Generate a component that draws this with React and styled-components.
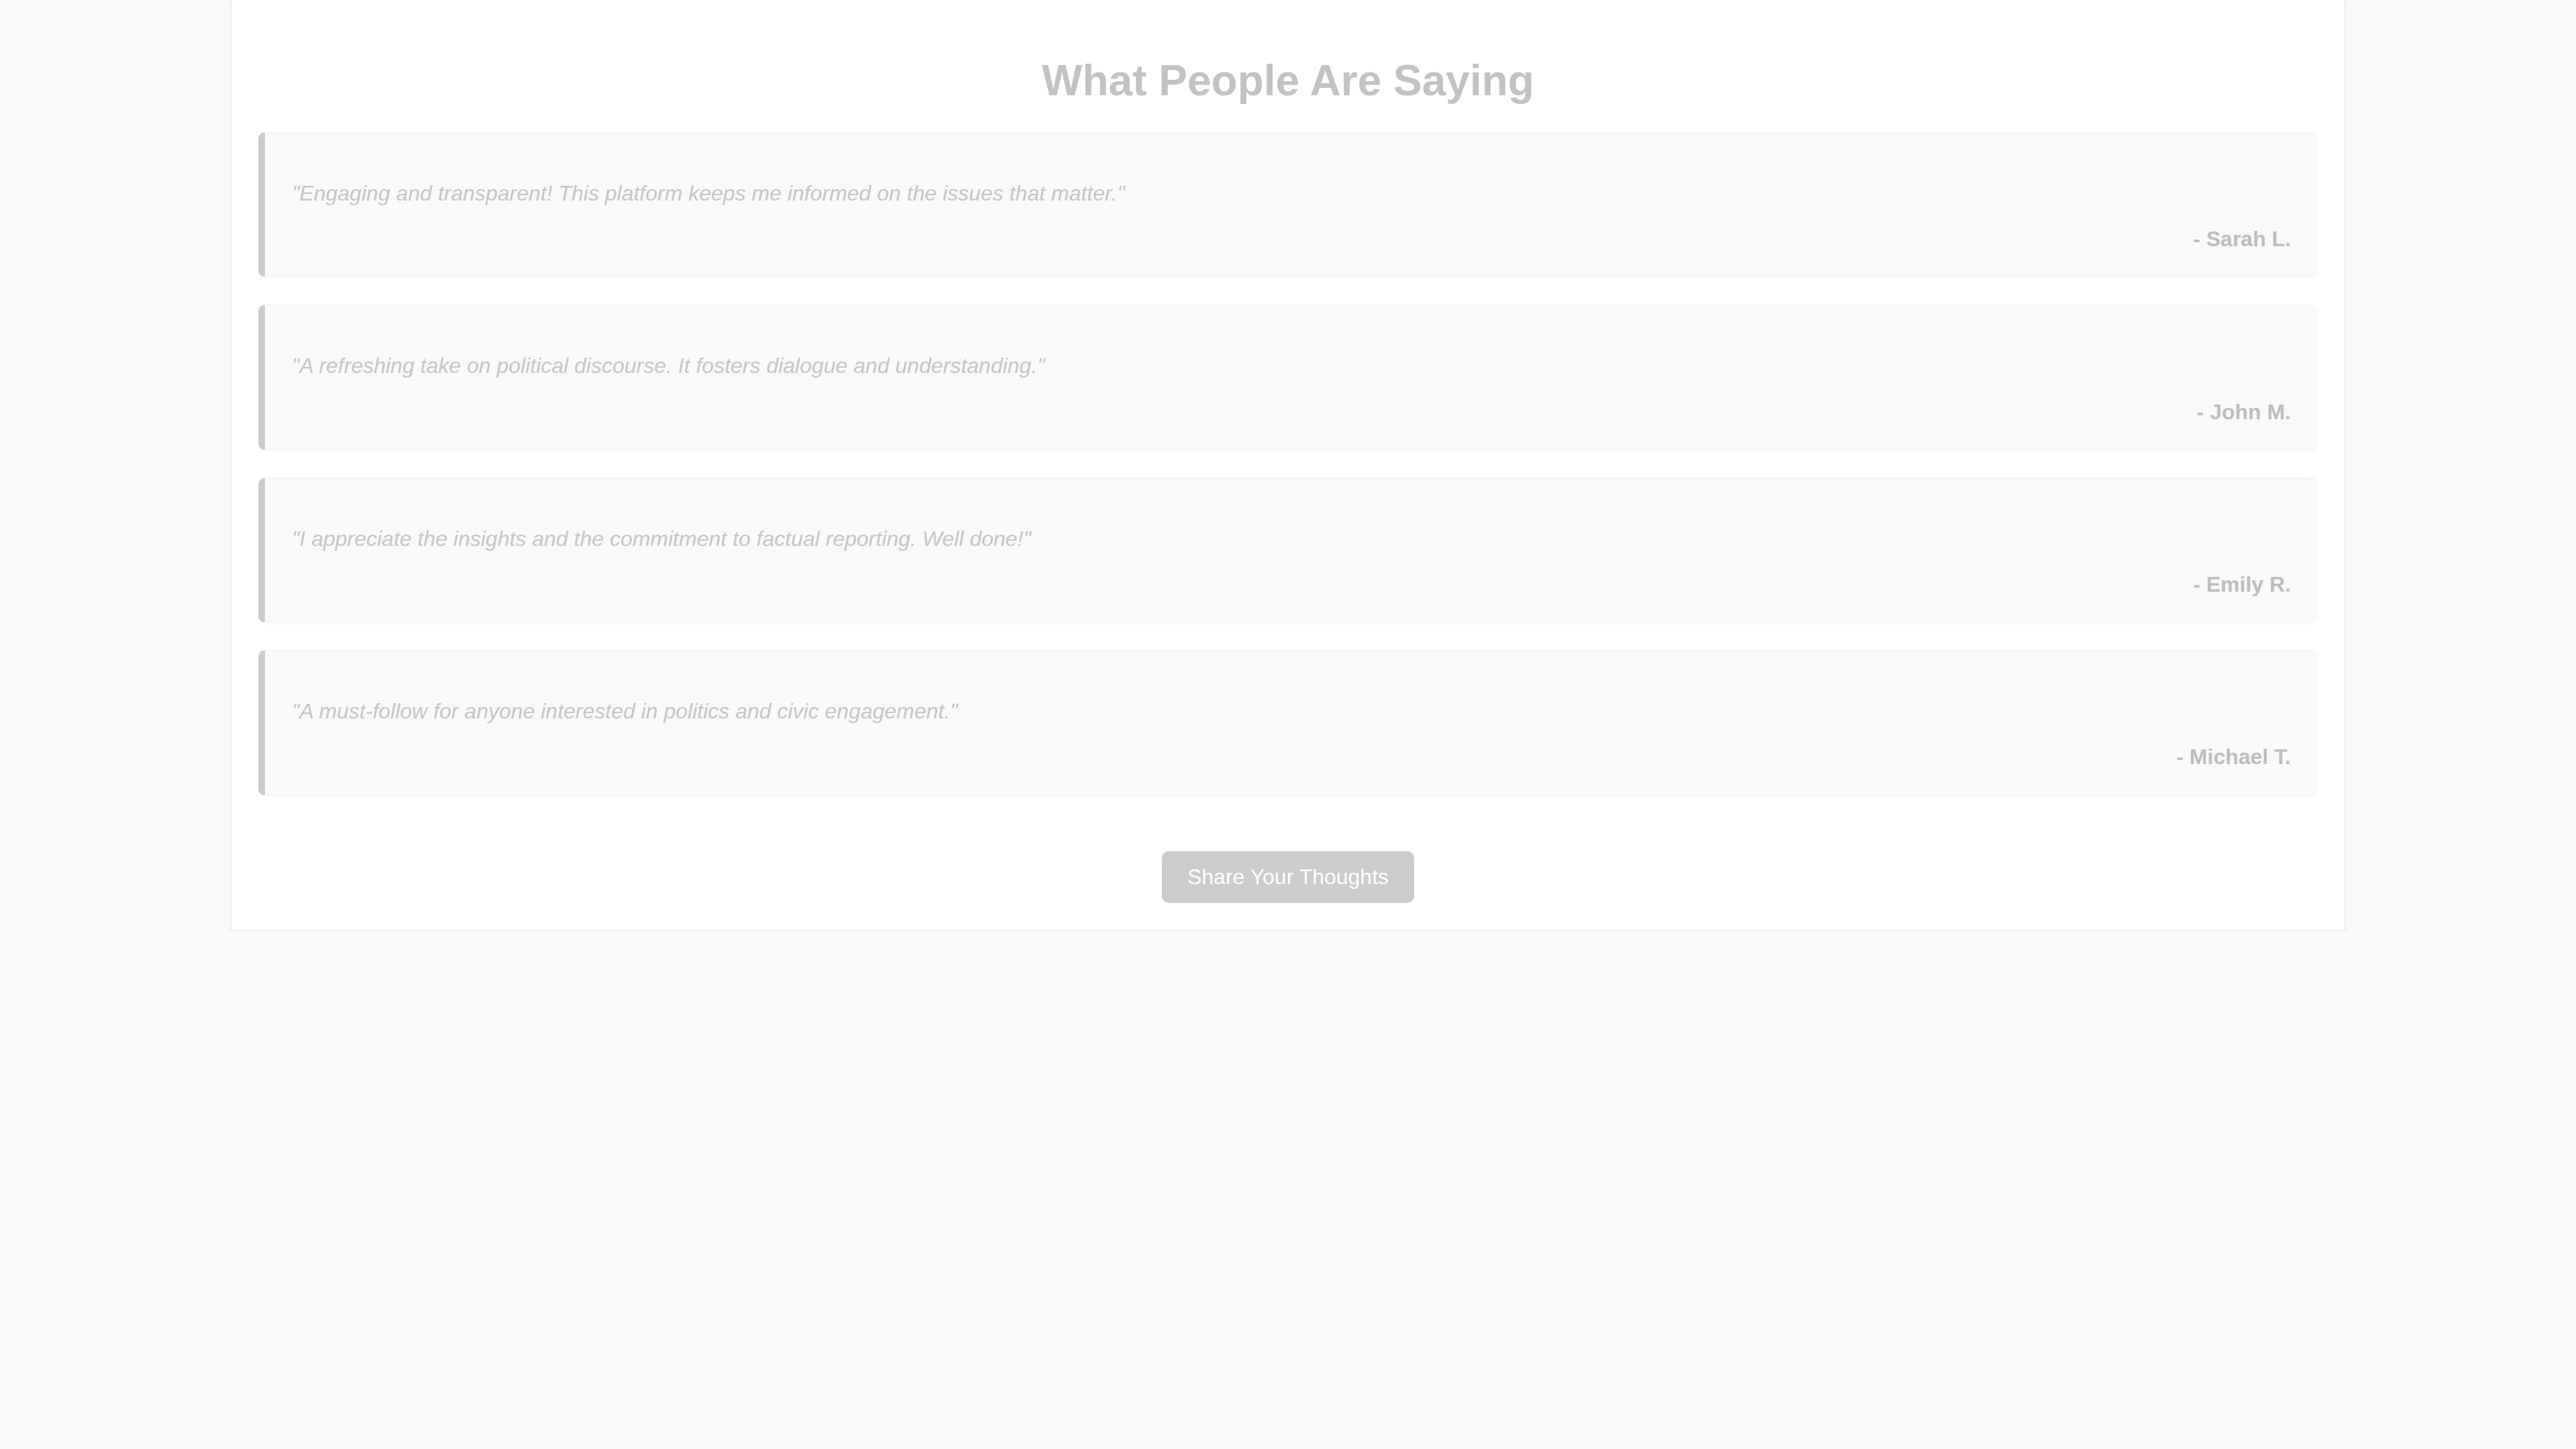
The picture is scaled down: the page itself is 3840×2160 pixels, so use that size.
import React from "react";
import styled, { createGlobalStyle } from "styled-components";

const GlobalStyle = createGlobalStyle`
  html, body {
    margin: 0;
    padding: 0;
    background: #fafafa;
    font-family: "Liberation Sans", Arial, sans-serif;
  }
`;

const Section = styled.section`
  width: 3152px;
  margin: 0 auto;
  padding: 83px 40px 40px;
  box-sizing: border-box;
  background: #ffffff;
  border-left: 1px solid #e4e4e4;
  border-right: 1px solid #e4e4e4;
  border-bottom: 1px solid #e4e4e4;
  box-shadow: 0 4px 16px rgba(0, 0, 0, 0.035);
`;

const Title = styled.h2`
  margin: 0 0 40px;
  font-size: 64px;
  font-weight: bold;
  line-height: normal;
  text-align: center;
  color: #c2c2c2;
`;

const List = styled.div`
  display: flex;
  flex-direction: column;
  gap: 41px;
`;

const Card = styled.div`
  padding: 65px 40px 30px;
  background: #f9f9f9;
  border-left: 10px solid #cccccc;
  border-top: 1px solid #efefef;
  border-bottom: 1px solid #efefef;
  border-radius: 10px;
  box-shadow: 0 2px 6px rgba(0, 0, 0, 0.025);
`;

const Quote = styled.p`
  margin: 0;
  font-size: 32px;
  font-style: italic;
  line-height: 1.6;
  color: #c6c6c6;
`;

const Author = styled.p`
  margin: 17px 0 0;
  font-size: 32px;
  font-weight: bold;
  line-height: 1.6;
  text-align: right;
  color: #bdbdbd;
`;

const Actions = styled.div`
  display: flex;
  justify-content: center;
  margin-top: 83px;
`;

const Button = styled.button`
  padding: 20px 38px;
  border: none;
  border-radius: 10px;
  background: #cccccc;
  color: #ffffff;
  font-family: "Liberation Sans", Arial, sans-serif;
  font-size: 32px;
  line-height: normal;
  cursor: pointer;
`;

const testimonials = [
  {
    quote:
      "Engaging and transparent! This platform keeps me informed on the issues that matter.",
    author: "Sarah L.",
  },
  {
    quote:
      "A refreshing take on political discourse. It fosters dialogue and understanding.",
    author: "John M.",
  },
  {
    quote:
      "I appreciate the insights and the commitment to factual reporting. Well done!",
    author: "Emily R.",
  },
  {
    quote:
      "A must-follow for anyone interested in politics and civic engagement.",
    author: "Michael T.",
  },
];

const App = () => {
  return (
    <>
      <GlobalStyle />
      <Section>
        <Title>What People Are Saying</Title>
        <List>
          {testimonials.map((t) => (
            <Card key={t.author}>
              <Quote>"{t.quote}"</Quote>
              <Author>- {t.author}</Author>
            </Card>
          ))}
        </List>
        <Actions>
          <Button>Share Your Thoughts</Button>
        </Actions>
      </Section>
    </>
  );
};

export default App;
